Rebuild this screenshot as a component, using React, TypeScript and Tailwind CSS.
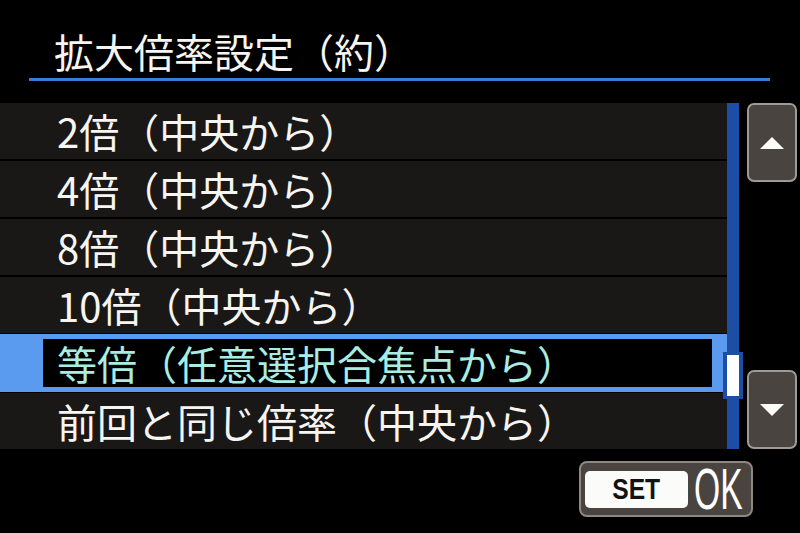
import React from 'react'

const ITEMS = [
  '2倍（中央から）',
  '4倍（中央から）',
  '8倍（中央から）',
  '10倍（中央から）',
  '等倍（任意選択合焦点から）',
  '前回と同じ倍率（中央から）',
]
const SELECTED = 4

const FONT = { fontFamily: '"Noto Sans CJK JP", "Noto Sans", sans-serif' }
const LATIN = { fontFamily: '"Liberation Sans", Arial, sans-serif' }

function Arrow({ up }: { up?: boolean }) {
  return (
    <svg width="26" height="14" viewBox="0 0 26 14">
      <polygon points={up ? '13,1 25,13 1,13' : '1,1 25,1 13,13'} fill="#fbfbf8" />
    </svg>
  )
}

function ScrollButton({ up }: { up?: boolean }) {
  return (
    <div className="w-[50px] h-[79px] rounded-[7px] border-2 border-[#a19a94] bg-[#4a4441] flex items-center justify-center">
      <Arrow up={up} />
    </div>
  )
}

export default function App() {
  return (
    <div className="w-[800px] h-[533px] bg-black overflow-hidden text-[#f6f5f1]" style={FONT}>
      {/* Title */}
      <div className="pl-[54px] pt-[31px] h-[78px] text-[40px] leading-none">
        拡大倍率設定（約）
      </div>
      <div className="ml-[29px] w-[741px] h-[3px] bg-[#3b7bd9]" />

      {/* List */}
      <div className="mt-[22px] flex">
        <div className="w-[727px] flex flex-col gap-[2px]">
          {ITEMS.map((item, i) =>
            i === SELECTED ? (
              <div key={item} className="h-[58px] -my-[1px] bg-[#5b9bef] pl-[43px] pr-[15px] py-[5px]">
                <div className="h-full bg-black flex items-center pl-[14px] text-[40px] leading-none text-[#a9ece1]">
                  {item}
                </div>
              </div>
            ) : (
              <div key={item} className="h-[56px] bg-[#1a1817] flex items-center pl-[57px] text-[40px] leading-none">
                {item}
              </div>
            )
          )}
        </div>

        {/* Scroll track */}
        <div className="w-[12px] h-[346px] bg-[#1d4ea6] relative">
          <div className="absolute left-[-4px] top-[249px] w-[20px] h-[47px] bg-[#1d4ea6] py-[3px] px-[4px]">
            <div className="w-full h-full bg-white" />
          </div>
        </div>

        <div className="ml-[8px] h-[346px] flex flex-col justify-between">
          <ScrollButton up />
          <ScrollButton />
        </div>
      </div>

      {/* SET OK */}
      <div className="mt-[12px] flex justify-end pr-[47px]">
        <div className="w-[174px] h-[56px] rounded-[8px] border-2 border-[#8e8782] bg-[#4a4441] flex items-center pl-[4px]">
          <div
            className="w-[103px] h-[37px] shrink-0 rounded-[5px] bg-[#fbfbf9] flex items-center justify-center text-[#121212]"
            style={LATIN}
          >
            <span className="text-[29px] font-bold leading-none scale-x-[0.85]">SET</span>
          </div>
          <div className="w-[52px] shrink-0 ml-[6px] overflow-visible" style={LATIN}>
            <div className="text-[58px] leading-none text-white origin-left scale-x-[0.58] whitespace-nowrap">
              OK
            </div>
          </div>
        </div>
      </div>
    </div>
  )
}
